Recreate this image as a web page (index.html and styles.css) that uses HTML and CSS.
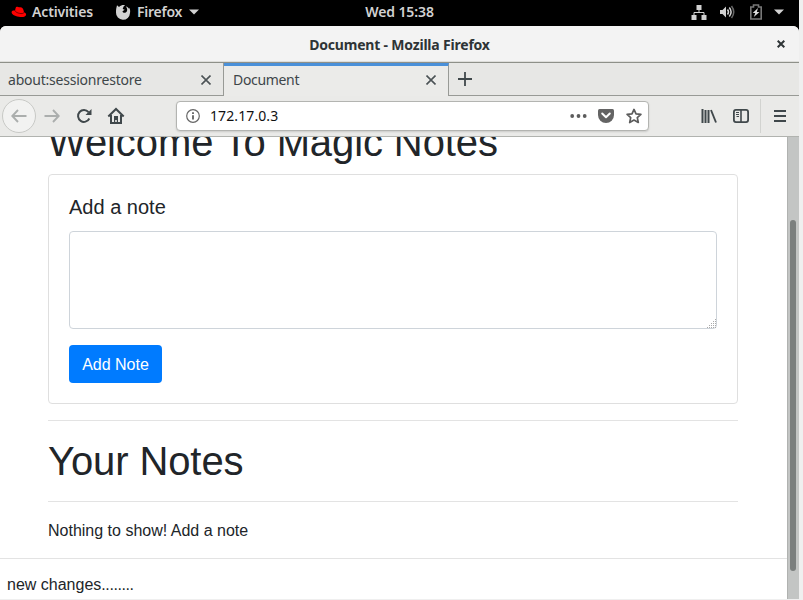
FILE: index.html
```html
<!DOCTYPE html>
<html lang="en">
<head>
<meta charset="utf-8">
<title>Document</title>
<link rel="stylesheet" href="styles.css">
</head>
<body>
<div class="desktop">
  <header class="topbar">
    <svg class="hat" width="16" height="13" viewBox="0 0 16 13"><path fill="#f00" d="M4.7 1.8C5 .6 6 .8 7.1 1.1c.8.2 1.2-.1 2.2.1 2 .3 2.900 1.200 3.300 3.200l.4 1.800c1.300.5 2.300 1.400 2.100 2.600-.3 2-3.500 2.800-7.300 2C3.600 10 .3 8 .6 5.900.8 4.600 2.200 4.300 4 4.400z"/><path d="M4 4.500c.4 2.200 5.800 3.700 8.200 2.800.6-.2.800-.6.800-1.100" fill="none" stroke="#600" stroke-width=".9"/></svg>
    <span class="activities">Activities</span>
    <svg class="fox" width="16" height="16" viewBox="0 0 16 16"><path fill="#d2d2d2" d="M2 1.300 4 3C6 1.200 8 .8 10 1.200L8.600 2.500 7.700 5l2 .8-2.200 1.500c.3 2 3.700 2.200 4.500-.2.600-1.700 0-3.200-1.200-4.600 1.600.3 2.400 1.200 3 2.300l.1-1.300C15.200 5 15.400 7 15 9a7 7 0 0 1-14-.5C.9 5 1.600 3.500 2 1.300z"/></svg>
    <span class="app">Firefox</span>
    <svg class="caret" width="10" height="6" viewBox="0 0 10 6"><path fill="#d2d2d2" d="M0 .5h10L5 5.500z"/></svg>
    <span class="clock">Wed 15:38</span>
    <span class="tray">
      <svg width="16" height="16" viewBox="0 0 16 16"><path fill="#d2d2d2" d="M5.500 1h5v5h-5zM.500 11h5v5h-5zM10.500 11h5v5h-5z"/><path d="M8 5v3.500M3 11V8.500h10V11" fill="none" stroke="#d2d2d2"/></svg>
      <svg width="16" height="16" viewBox="0 0 16 16"><path fill="#d2d2d2" d="M1 6h2.500L7 2.500v11L3.500 10H1z"/><path d="M8.500 5.500q2 2.500 0 5M10.300 3.500q3.600 4.500 0 9" fill="none" stroke="#d2d2d2" stroke-width="1.500"/><path d="M12.500 2q4.500 6 0 12" fill="none" stroke="#666" stroke-width="1.500"/></svg>
      <svg width="12" height="16" viewBox="0 0 12 16"><path d="M.8 3h2.700V1h5v2h2.700v12H.8z" fill="none" stroke="#777" stroke-width="1.600"/><path fill="#ddd" d="M8 4 2.700 9H5.300L3.800 13 9.500 8H6.800z"/></svg>
      <svg width="10" height="6" viewBox="0 0 10 6"><path fill="#d2d2d2" d="M0 .5h10L5 5.500z"/></svg>
    </span>
  </header>

  <div class="window">
    <div class="titlebar">
      <span class="title">Document - Mozilla Firefox</span>
      <svg class="win-close" width="8" height="8" viewBox="0 0 8 8"><path d="m.7.700 6.600 6.600M7.300.700.700 7.300" stroke="#2e3436" stroke-width="2"/></svg>
    </div>
    <nav class="tabs">
      <div class="tab"><span class="session">about:sessionrestore</span><svg width="10" height="10" viewBox="0 0 10 10"><path d="m.5.500 9 9M9.500.500l-9 9" stroke="#4c5356" stroke-width="1.600"/></svg></div>
      <div class="tab active"><span class="doc">Document</span><svg width="10" height="10" viewBox="0 0 10 10"><path d="m.5.500 9 9M9.500.500l-9 9" stroke="#4c5356" stroke-width="1.600"/></svg></div>
      <div class="newtab"><svg width="14" height="14" viewBox="0 0 14 14"><path d="M7 0v14M0 7h14" stroke="#40484b" stroke-width="1.800"/></svg></div>
    </nav>
    <div class="toolbar">
      <span class="back"><svg width="16" height="14" viewBox="0 0 16 14"><path d="M15.500 7H1.500M7 1 1.300 7 7 13" fill="none" stroke="#abaead" stroke-width="1.900"/></svg></span>
      <svg class="forward" width="16" height="14" viewBox="0 0 16 14"><path d="M.500 7h14M9 1l5.700 6L9 13" fill="none" stroke="#abaead" stroke-width="1.900"/></svg>
      <svg class="reload" width="16" height="16" viewBox="0 0 16 16"><path d="M12.500 4.200A5.900 5.900 0 1 0 13.300 10.500" fill="none" stroke="#40484b" stroke-width="2"/><path fill="#40484b" d="M15.500 1V7H9.500z"/></svg>
      <svg class="home" width="18" height="18" viewBox="0 0 18 18"><path d="M1.300 9.500 9 2l7.700 7.500" fill="none" stroke="#40484b" stroke-width="2"/><path d="M4 8v8h10V8" fill="none" stroke="#40484b" stroke-width="2"/><path fill="#40484b" d="M7 9h4v7H9.800v-3H8.200v3H7z"/></svg>
      <div class="urlbar">
        <svg class="info" width="14" height="14" viewBox="0 0 14 14"><circle cx="7" cy="7" r="6.300" fill="none" stroke="#666" stroke-width="1.200"/><path d="M7 6.200v4.300M7 3.200v1.800" stroke="#555" stroke-width="1.700"/></svg>
        <span class="address">172.17.0.3</span>
        <svg class="dots" width="17" height="4" viewBox="0 0 17 4"><g fill="#5c5c5c"><circle cx="2.200" cy="2" r="1.900"/><circle cx="8.500" cy="2" r="1.900"/><circle cx="14.700" cy="2" r="1.900"/></g></svg>
        <svg class="pocket" width="16" height="14" viewBox="0 0 16 14"><path fill="#646464" d="M1.500 0h13Q16 0 16 1.500V6A8 8 0 0 1 0 6V1.500Q0 0 1.500 0z"/><path d="m4.200 4.500 3.800 3.700 3.800-3.700" fill="none" stroke="#fff" stroke-width="2" stroke-linecap="round" stroke-linejoin="round"/></svg>
        <svg class="star" width="16" height="16" viewBox="0 0 16 16"><path d="m8 1.400 2 4.400 4.900.5-3.600 3.300 1 4.900L8 12.100l-4.300 2.400 1-4.900L1.100 6.300 6 5.800z" fill="none" stroke="#5c5c5c" stroke-width="1.700" stroke-linejoin="round"/></svg>
      </div>
      <svg class="library" width="16" height="14" viewBox="0 0 16 14"><path d="M1.500 0v14M4.500 1v13M7.500 1v13" stroke="#40484b" stroke-width="2"/><path d="m10 1 5 12.500" stroke="#40484b" stroke-width="1.900"/></svg>
      <svg class="sidebar" width="16" height="14" viewBox="0 0 16 14"><rect x=".9" y=".9" width="14.200" height="12.200" rx="2" fill="none" stroke="#40484b" stroke-width="1.800"/><path d="M8 1v12" stroke="#40484b" stroke-width="1.600"/><path d="M3 3.500h3M3 5.500h3M3.500 7.500H6" stroke="#40484b"/></svg>
      <span class="divider"></span>
      <svg class="menu" width="12" height="12" viewBox="0 0 12 12"><path d="M0 1h12M0 6h12M0 11h12" stroke="#40484b" stroke-width="1.900"/></svg>
    </div>
    <div class="viewport">
      <main class="page">
        <div class="container">
          <h1>Welcome To Magic Notes</h1>
          <section class="card">
            <h5>Add a note</h5>
            <div class="field"><svg width="9" height="9" viewBox="0 0 9 9"><path d="M8.500 0v9M6.500 2v7M4.500 4v5M2.500 6v3M.500 8v1" stroke="#aaa" stroke-dasharray="1 1"/></svg></div>
            <button class="btn">Add Note</button>
          </section>
          <hr>
          <h1>Your Notes</h1>
          <hr>
          <div class="empty">Nothing to show! Add a note</div>
        </div>
        <hr>
        <p class="footer">new changes<span class="leader">........</span></p>
      </main>
      <div class="scrollbar"><div class="thumb"></div></div>
    </div>
  </div>
</div>
</body>
</html>
```
FILE: styles.css
```css
* { box-sizing: border-box; }
body { margin: 0; background: #efefef; overflow: hidden; }
svg { display: block; flex: none; }
span { white-space: nowrap; }
.desktop { width: 799px; height: 599px; background: #000; font-family: "Noto Sans", sans-serif; overflow: hidden; }
.topbar { position: relative; height: 26px; display: flex; align-items: center; color: #d2d2d2; font-size: 14px; font-weight: 600; line-height: 24px; padding: 0 15px 2px 11px; }
.activities { margin-left: 5px; width: 63px; letter-spacing: -.15px; }
.fox { margin-left: 20px; }
.app { margin-left: 6px; width: 48px; letter-spacing: -.25px; }
.caret { margin-left: 4px; }
.clock { position: absolute; left: 0; right: 0; text-align: center; letter-spacing: -.1px; }
.tray { margin-left: auto; display: flex; align-items: center; gap: 12px; }
.tray svg:nth-child(2) { margin-right: 3px; }
.window { height: 573px; background: #eaeae8; border-radius: 6px 6px 0 0; overflow: hidden; }
.titlebar { position: relative; height: 37px; display: flex; align-items: center; justify-content: center; background: #f3f3f3; border-bottom: 1px solid #8e9089; box-shadow: inset 0 -1px #dededb; color: #2e3436; font-size: 14px; font-weight: 700; }
.title { letter-spacing: -.2px; }
.win-close { position: absolute; right: 14px; top: 14px; }
.tabs { height: 33px; display: flex; color: #3e4649; font-size: 14px; }
.tab { width: 224px; height: 33px; display: flex; align-items: center; justify-content: space-between; padding: 1px 13px 0 8px; background: #e7e7e5; border-right: 1px solid #989a96; border-bottom: 1px solid #989a96; }
.tab svg { margin-right: -1px; }
.tab.active { width: 225px; padding: 0 13px 2px 9px; background: #ebebe9; border-top: 3px solid #4a90d9; border-bottom: 0; }
.session { letter-spacing: -.22px; }
.doc { letter-spacing: -.33px; margin-top: -2px; }
.newtab { flex: 1; display: flex; align-items: center; padding-left: 9px; background: #e7e7e5; border-bottom: 1px solid #989a96; }
.toolbar { height: 41px; display: flex; align-items: center; background: #eaeae8; border-bottom: 1px solid #b1b3af; padding-left: 2px; }
.back { width: 34px; height: 34px; display: flex; align-items: center; justify-content: center; border: 1px solid #c8c9c6; border-radius: 50%; background: #f2f2f1; }
.forward { margin-left: 8px; }
.reload { margin-left: 16px; }
.home { margin-left: 15px; margin-top: -1px; }
.urlbar { width: 473px; height: 30px; margin-left: 51px; margin-top: -1px; padding: 0 6px 0 9px; display: flex; align-items: center; background: #fff; border: 1px solid #b3b4b1; border-radius: 4px; box-shadow: 0 1px 2px #0002; }
.address { color: #111; font-size: 14px; margin-left: 10px; letter-spacing: .1px; }
.dots { margin-left: auto; }
.pocket { margin-left: 11px; }
.star { margin-left: 12px; }
.library { margin-left: 52px; }
.sidebar { margin-left: 16px; }
.divider { width: 1px; height: 34px; margin-left: 11px; background: #d2d3d0; }
.menu { margin-left: 13px; }
.viewport { height: 462px; display: flex; background: #fff; overflow: hidden; }
.page { flex: 1; height: 462px; overflow: hidden; font: 16px/24px "Liberation Sans", Arial, sans-serif; color: #212529; }
.container { margin: -19px 49px 0 48px; }
h1 { margin: 0 0 8px; font-size: 40px; line-height: 48px; font-weight: 400; letter-spacing: -.1px; }
.card { height: 230px; padding: 20px; border: 1px solid #dfdfdf; border-radius: 4px; }
h5 { margin: 0 0 12px; font-size: 20px; line-height: 24px; font-weight: 400; }
.field { height: 98px; margin-bottom: 16px; display: flex; align-items: flex-end; justify-content: flex-end; border: 1px solid #ced4da; border-radius: 4px; }
.btn { display: block; width: 93px; height: 38px; padding: 2px 0 0; border: 0; border-radius: 4px; background: #007bff; color: #fff; font: inherit; }
hr { margin: 16px 0; border: 0; border-top: 1px solid #e3e3e3; }
.empty { padding-top: 1px; margin-bottom: -1px; }
.page > hr { margin-bottom: 14px; }
.footer { margin: 0 0 0 7px; }
.leader { letter-spacing: -.4px; }
.scrollbar { width: 12px; padding: 83px 2px 0 2px; background: #c3c5c4; border-left: 1px solid #b0b2b0; }
.thumb { width: 6px; height: 351px; margin-left: auto; margin-right: 1px; border-radius: 3px; background: #7b7f7e; }
```
